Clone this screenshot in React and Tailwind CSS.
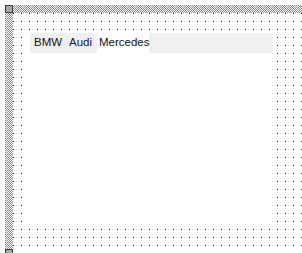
export default function App() {
  const hatch =
    "bg-[repeating-conic-gradient(#8a8a8a_0_25%,#ffffff_0_50%)] bg-[length:2px_2px]";
  return (
    <div className="w-[302px] h-[253px] bg-white overflow-hidden pl-[5px] pt-[5px]">
      <div className="grid grid-cols-[8px_289px] grid-rows-[8px_236px_8px]">
        <div className="w-[8px] h-[8px] bg-[#a8a8a8] border border-[#3c3c3c]" />
        <div className={`h-[8px] ${hatch}`} />
        <div className={`w-[8px] ${hatch}`} />
        <div className="row-span-2 bg-white bg-[conic-gradient(at_1px_1px,transparent_75%,#1a1a1a_0)] bg-[length:8px_8px] pl-[15px] pt-[19px]">
          <div
            className="w-[247px] h-[195px] bg-white pl-[2px] pt-[1px]"
            style={{ fontFamily: '"Liberation Sans", Arial, sans-serif' }}
          >
            <div className="w-[243px] h-[20px] bg-[#f0f0f0] flex items-stretch text-[11.5px] leading-none">
              <span className="w-[34px] pl-[4px] flex items-center text-[#111111]">BMW</span>
              <span className="w-[33px] pl-[5px] flex items-center text-[#141450]">Audi</span>
              <span className="w-[52px] pl-[2px] flex items-center bg-white text-[#111111]">Mercedes</span>
            </div>
          </div>
        </div>
        <div className="w-[8px] h-[8px] bg-[#a8a8a8] border border-[#3c3c3c]" />
      </div>
    </div>
  );
}
